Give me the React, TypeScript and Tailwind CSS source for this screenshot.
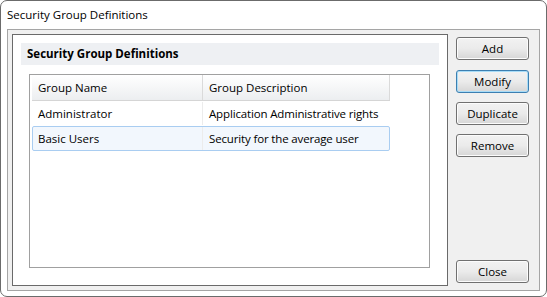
const FONT = { fontFamily: '"Open Sans", "Noto Sans", sans-serif' };

function Btn({ label, focused = false, className = "" }: { label: string; focused?: boolean; className?: string }) {
  return (
    <button
      className={
        "flex h-[23px] w-[73px] items-center justify-center rounded-[3px] border bg-gradient-to-b from-[#f2f2f2] via-[#ebebeb] to-[#d6d6d6] text-[11.5px] leading-none text-black " +
        (focused
          ? "border-[#3c7fb1] shadow-[inset_0_0_0_1px_#a8dcf7] "
          : "border-[#707070] shadow-[inset_0_0_0_1px_#fcfcfc] ") +
        className
      }
    >
      {label}
    </button>
  );
}

const rows = [
  { name: "Administrator", desc: "Application Administrative rights" },
  { name: "Basic Users", desc: "Security for the average user" },
];

export default function App() {
  return (
    <div style={FONT} className="h-[297px] w-[547px] overflow-hidden whitespace-nowrap rounded-[7px] border border-[#6b6b6b] bg-white text-[11.5px] text-black">
      <div className="flex h-[28px] items-center pl-[6px]">Security Group Definitions</div>
      <div className="ml-[6px] flex h-[262px] w-[533px] border border-[#a5a5a5] bg-[#f0f0f0] p-[4px]">
        <div className="h-[252px] w-[436px] shrink-0 border border-[#6a6a6a] bg-white">
          <div className="ml-[8px] mt-[8px] flex h-[22px] w-[418px] items-center bg-[#eef0f3] pl-[6px] font-bold">
            Security Group Definitions
          </div>
          <div className="ml-[16px] mt-[9px] h-[194px] w-[401px] border border-[#a0a0a0] px-[1px]">
            <div className="ml-[1px] flex h-[26px] w-[358px] border-b border-[#d5d5d5] bg-gradient-to-b from-white to-[#eceef0]">
              <div className="flex w-[171px] items-center border-r border-[#dadada] pl-[6px]">Group Name</div>
              <div className="flex w-[187px] items-center border-r border-[#dadada] pl-[6px]">Group Description</div>
            </div>
            {rows.map((r, i) => (
              <div
                key={r.name}
                className={
                  "ml-[1px] flex h-[25px] w-[358px] border " +
                  (i === 1 ? "rounded-[2px] border-[#a9cdf1] bg-[#f2f7fd]" : "border-transparent")
                }
              >
                <div className="flex w-[170px] items-center border-r border-[#ececec] pl-[5px]">{r.name}</div>
                <div className="flex flex-1 items-center pl-[6px] tracking-[-0.15px]">{r.desc}</div>
              </div>
            ))}
          </div>
        </div>
        <div className="flex flex-1 flex-col pl-[8px] pt-[3px] pb-[3px]">
          <Btn label="Add" className="mb-[10px]" />
          <Btn label="Modify" focused className="mb-[9px]" />
          <Btn label="Duplicate" className="mb-[9px]" />
          <Btn label="Remove" />
          <Btn label="Close" className="mt-auto" />
        </div>
      </div>
    </div>
  );
}
